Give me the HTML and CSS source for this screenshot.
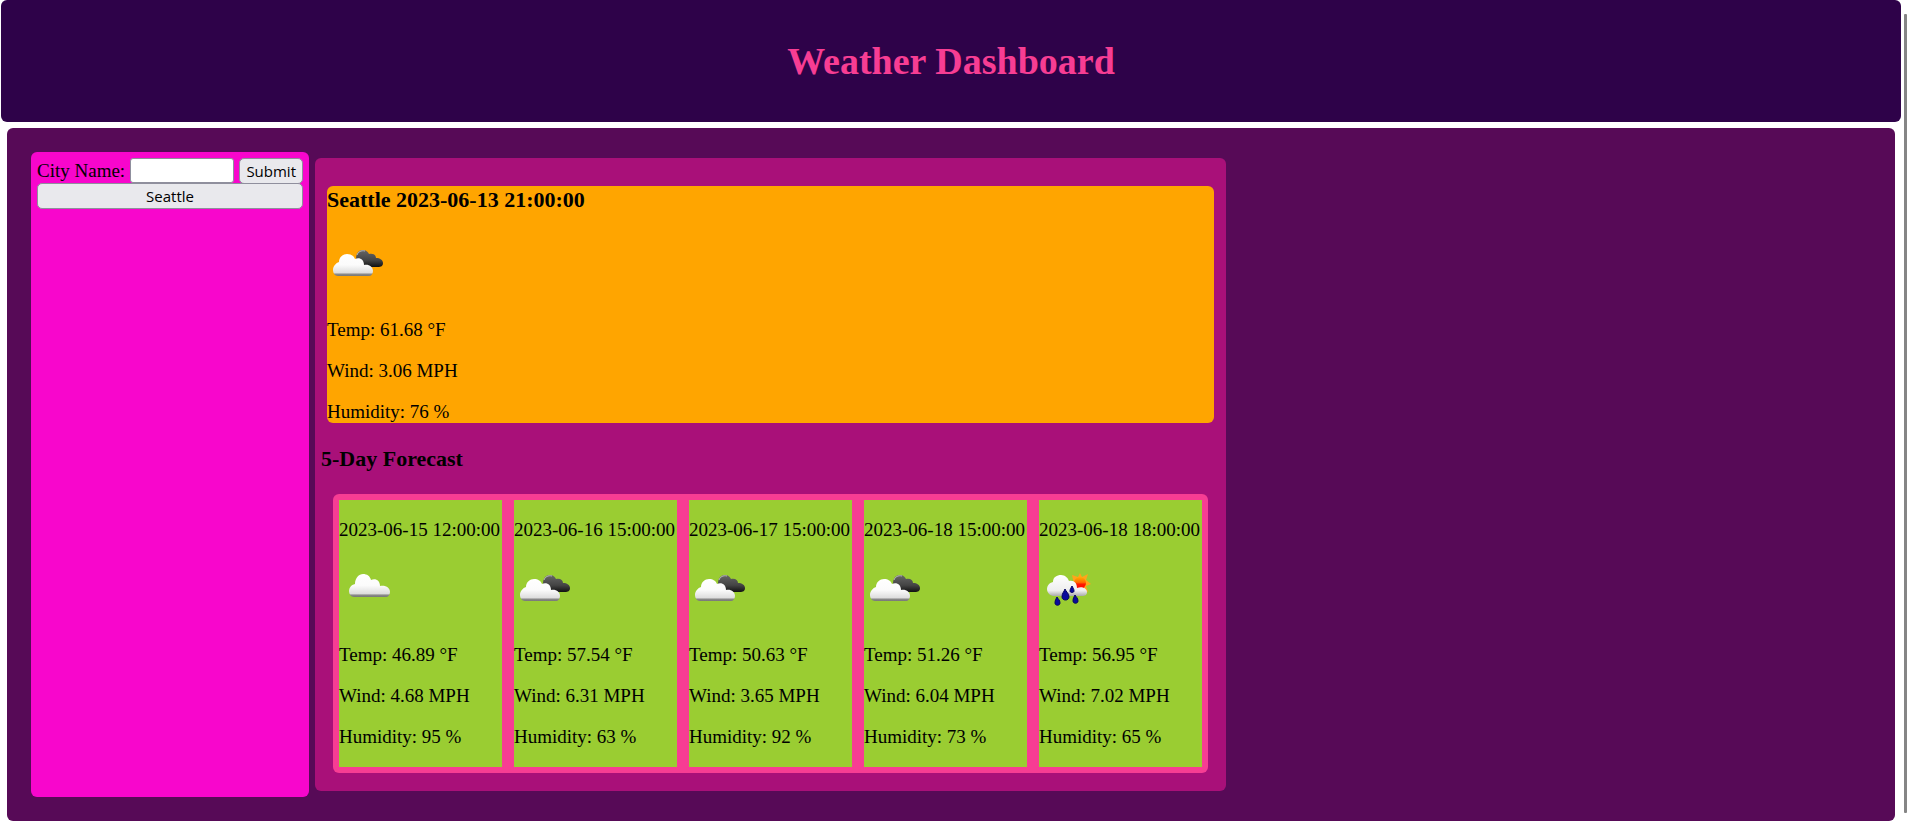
FILE: index.html
```html
<!DOCTYPE html>
<html lang="en">
<head>
<meta charset="utf-8">
<title>Weather Dashboard</title>
<link rel="stylesheet" href="styles.css">
</head>
<body>
<svg class="defs" width="0" height="0" aria-hidden="true">
  <defs>
    <linearGradient id="white" x1="0" y1="0" x2="0" y2="1">
      <stop offset="0" stop-color="#fff"/><stop offset=".5" stop-color="#fbfbfb"/><stop offset=".85" stop-color="#dedede"/><stop offset=".92" stop-color="#8a8a8a"/><stop offset="1" stop-color="#777"/>
    </linearGradient>
    <linearGradient id="dark" x1="0" y1="0" x2="0" y2="1">
      <stop offset="0" stop-color="#666"/><stop offset=".6" stop-color="#444"/><stop offset="1" stop-color="#111"/>
    </linearGradient>
    <linearGradient id="soft" x1="0" y1="0" x2="0" y2="1">
      <stop offset="0" stop-color="#fff"/><stop offset=".75" stop-color="#eee"/><stop offset="1" stop-color="#aaa"/>
    </linearGradient>
    <linearGradient id="sun" x1="0" y1="0" x2="0" y2="1">
      <stop offset="0" stop-color="#ffb000"/><stop offset=".45" stop-color="#ff6a00"/><stop offset=".6" stop-color="#ff1800"/><stop offset="1" stop-color="#f00"/>
    </linearGradient>
    <symbol id="broken-clouds" viewBox="0 0 60 60">
      <path fill="url(#dark)" d="M29 24C29 18 32 15 36 15C39 15 41 17 42 19C46 18 49 20 49 23C53 23 56 25 56 28C56 31 54 32 51 32H34Z"/>
      <path fill="none" stroke="#bbb" stroke-width="1" d="M30 20C31 17 34 15 38 16"/>
      <path fill="url(#white)" d="M11 41C8 41 6 38 6 35C6 31 9 28 12 27C12 22 16 19 20 19C24 19 27 21 28 24C33 22 37 25 37 30C42 29 46 32 46 36C46 39 44 41 42 41Z"/>
    </symbol>
    <symbol id="scattered-clouds" viewBox="0 0 60 60">
      <path fill="url(#white)" d="M15 37C12 37 10 34 10 31C10 28 12 25 16 24C16 18 20 14 24 14C28 14 31 16 32 20C37 18 41 21 41 26C47 25 51 28 51 32C51 35 49 37 47 37Z"/>
    </symbol>
    <symbol id="rain" viewBox="0 0 60 60">
      <path fill="#ffa51c" d="M41 13L43 17L49 14L47 20L52 24L47 26L49 32L41 30L35 24L33 15L39 17Z"/>
      <circle cx="41" cy="23" r="6" fill="url(#sun)"/>
      <path fill="url(#soft)" d="M14 36C10 35 8 32 8 29C8 26 10 23 14 22C14 17 18 15 22 15C26 15 29 18 30 21C35 20 38 23 38 28C44 26 48 29 48 32C48 35 46 36 43 36Z"/>
      <g fill="#0a0a9c" stroke="#050560" stroke-width="1">
        <path d="M26 29C25 32 23 33 23 37C23 41 30 41 30 37C30 33 27 32 26 29Z"/>
        <path d="M33 26C32 28 31 29 31 31C31 33 35 33 35 31C35 29 34 28 33 26Z"/>
        <path d="M36 35C35 37 34 38 34 41C34 44 39 44 39 41C39 38 37 37 36 35Z"/>
        <path d="M18 37C17 39 16 40 16 43C16 46 21 46 21 43C21 40 19 39 18 37Z"/>
      </g>
    </symbol>
  </defs>
</svg>

<header class="banner">
  <h1 class="title">Weather Dashboard</h1>
</header>

<main class="dashboard">
  <aside class="search">
    <form class="search-form" onsubmit="return false">
      <label for="city">City Name:</label>
      <input class="field" id="city" type="text">
      <button class="button" type="submit">Submit</button>
    </form>
    <button class="button" type="button">Seattle</button>
  </aside>

  <section class="results">
    <article class="today">
      <h3>Seattle 2023-06-13 21:00:00</h3>
      <svg class="icon" role="img" aria-label="Broken clouds"><use href="#broken-clouds"/></svg>
      <p>Temp: 61.68 °F</p>
      <p>Wind: 3.06 MPH</p>
      <p>Humidity: 76 %</p>
    </article>
    <h3>5-Day Forecast</h3>
    <div class="forecast">
      <article class="day">
        <p>2023-06-15 12:00:00</p>
        <svg class="icon" role="img" aria-label="Scattered clouds"><use href="#scattered-clouds"/></svg>
        <p>Temp: 46.89 °F</p>
        <p>Wind: 4.68 MPH</p>
        <p>Humidity: 95 %</p>
      </article>
      <article class="day">
        <p>2023-06-16 15:00:00</p>
        <svg class="icon" role="img" aria-label="Broken clouds"><use href="#broken-clouds"/></svg>
        <p>Temp: 57.54 °F</p>
        <p>Wind: 6.31 MPH</p>
        <p>Humidity: 63 %</p>
      </article>
      <article class="day">
        <p>2023-06-17 15:00:00</p>
        <svg class="icon" role="img" aria-label="Broken clouds"><use href="#broken-clouds"/></svg>
        <p>Temp: 50.63 °F</p>
        <p>Wind: 3.65 MPH</p>
        <p>Humidity: 92 %</p>
      </article>
      <article class="day">
        <p>2023-06-18 15:00:00</p>
        <svg class="icon" role="img" aria-label="Broken clouds"><use href="#broken-clouds"/></svg>
        <p>Temp: 51.26 °F</p>
        <p>Wind: 6.04 MPH</p>
        <p>Humidity: 73 %</p>
      </article>
      <article class="day">
        <p>2023-06-18 18:00:00</p>
        <svg class="icon" role="img" aria-label="Rain"><use href="#rain"/></svg>
        <p>Temp: 56.95 °F</p>
        <p>Wind: 7.02 MPH</p>
        <p>Humidity: 65 %</p>
      </article>
    </div>
  </section>
</main>
<div class="scroll-thumb"></div>
</body>
</html>
```
FILE: styles.css
```css
* {
  box-sizing: border-box;
}

body {
  margin: 0 10px 0 1px;
  background: #fff;
  color: #000;
  font: 19px/22px "Liberation Serif", "Times New Roman", serif;
}

.defs {
  position: absolute;
}

.banner {
  padding: 38px 6px;
  border-radius: 6px;
  background: #2e0249;
  color: #f73d93;
  text-align: center;
}

.title {
  margin: 0;
  font-size: 38px;
  line-height: 46px;
}

.dashboard {
  display: flex;
  align-items: stretch;
  gap: 6px;
  margin: 6px;
  margin-bottom: 0;
  padding: 24px;
  border-radius: 6px;
  background: #570a57;
}

.search {
  display: flex;
  flex-direction: column;
  flex: 0 0 278px;
  min-width: 0;
  width: 278px;
  padding: 6px;
  border-radius: 6px;
  background: #f806cc;
}

.search-form {
  display: flex;
  align-items: center;
  gap: 5px;
  height: 25px;
}

.search-form label {
  white-space: nowrap;
}

.field {
  flex: 1;
  width: 0;
  min-width: 0;
  height: 25px;
  border: 1px solid #8f8f9d;
  border-radius: 3px;
  background: #fff;
  font: 15px "Open Sans", sans-serif;
}

.button {
  height: 26px;
  padding: 0 6px;
  border: 1px solid #8f8f9d;
  border-radius: 5px;
  background: #e9e9ed;
  color: #000;
  font: 15px/22px "Open Sans", sans-serif;
}

.results {
  margin: 6px 0;
  padding: 6px;
  border-radius: 6px;
  background: #a91079;
}

h3 {
  margin: 22px 0;
  font-size: 22px;
  line-height: 27px;
}

p {
  margin: 19px 0;
}

.today {
  margin: 22px 6px;
  border-radius: 6px;
  background: #ffa500;
}

.today h3 {
  margin-top: 0;
}

.today p:last-child {
  margin-bottom: 0;
}

.icon {
  display: block;
  width: 60px;
  height: 60px;
  margin-bottom: 24px;
}

.forecast {
  display: grid;
  grid-template-columns: repeat(5, minmax(163px, 1fr));
  gap: 12px;
  margin: 0 12px 12px;
  padding: 6px;
  border-radius: 6px;
  background: #f73d93;
}

.day {
  display: flow-root;
  background: #9acd32;
  white-space: nowrap;
}

.scroll-thumb {
  position: fixed;
  top: 14px;
  right: 4px;
  bottom: 13px;
  width: 3px;
  border-radius: 1px;
  background: #858585;
}
```
